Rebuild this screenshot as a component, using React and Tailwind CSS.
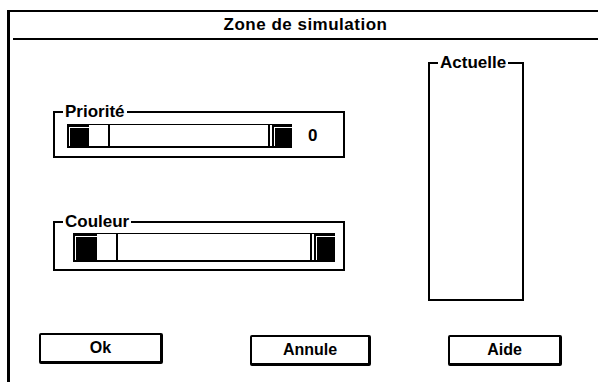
export default function App() {
  const font = { fontFamily: '"Liberation Sans", Arial, sans-serif' };
  const blk = "bg-black shadow-[inset_2px_2px_0_0_#000,inset_3px_3px_0_0_#fff]";
  return (
    <div className="w-[598px] h-[382px] bg-white overflow-hidden text-black" style={font}>
      <div className="ml-[7px] mt-[10px] h-[372px] border-l-[3px] border-t-2 border-black flex flex-col">
        <div className="ml-[3px] h-[28px] border-b-2 border-black flex items-center justify-center">
          <span className="text-[17px] leading-[18px] font-bold tracking-[0.5px]">Zone de simulation</span>
        </div>
        <div className="flex items-start">
          <div className="ml-[43px] mt-[63px] w-[292px] flex flex-col">
            <fieldset className="border-2 border-black h-[55px]">
              <legend className="ml-[8px] px-[2px] text-[17px] leading-[18px] font-bold">Priorité</legend>
              <div className="flex items-center pl-[12px] pt-[3px]">
                <div className="w-[225px] h-[24px] flex border-t border-b-2 border-black">
                  <div className={`w-[22px] ${blk}`} />
                  <div className="w-[21px] border-r-2 border-black bg-white" />
                  <div className="flex-1 border-r-2 border-black bg-white" />
                  <div className={`ml-[2px] w-[20px] ${blk}`} />
                </div>
                <span className="ml-[16px] text-[17px] leading-[18px] font-bold">0</span>
              </div>
            </fieldset>
            <fieldset className="mt-[55px] border-2 border-black h-[58px]">
              <legend className="ml-[8px] px-[2px] text-[17px] leading-[18px] font-bold">Couleur</legend>
              <div className="flex items-center pl-[18px] pt-[2px]">
                <div className="w-[262px] h-[29px] flex border-t border-b-2 border-black">
                  <div className={`w-[24px] ${blk}`} />
                  <div className="w-[21px] border-r-2 border-black bg-white" />
                  <div className="flex-1 border-r-2 border-black bg-white" />
                  <div className={`ml-[2px] w-[21px] ${blk}`} />
                </div>
              </div>
            </fieldset>
          </div>
          <fieldset className="ml-[83px] mt-[14px] w-[96px] h-[247px] border-2 border-black">
            <legend className="ml-[8px] px-[2px] text-[17px] leading-[18px] font-bold">Actuelle</legend>
          </fieldset>
        </div>
        <div className="flex items-start mt-[32px]">
          <button className="ml-[29px] w-[124px] h-[31px] border-2 border-r-[3px] border-b-[3px] border-black rounded-[2px] bg-white text-[16px] font-bold flex items-center justify-center">
            Ok
          </button>
          <button className="ml-[87px] mt-[2px] w-[121px] h-[31px] border-2 border-r-[3px] border-b-[3px] border-black rounded-[2px] bg-white text-[16px] font-bold flex items-center justify-center">
            Annule
          </button>
          <button className="ml-[77px] mt-[2px] w-[114px] h-[31px] border-2 border-r-[3px] border-b-[3px] border-black rounded-[2px] bg-white text-[16px] font-bold flex items-center justify-center">
            Aide
          </button>
        </div>
      </div>
    </div>
  );
}
